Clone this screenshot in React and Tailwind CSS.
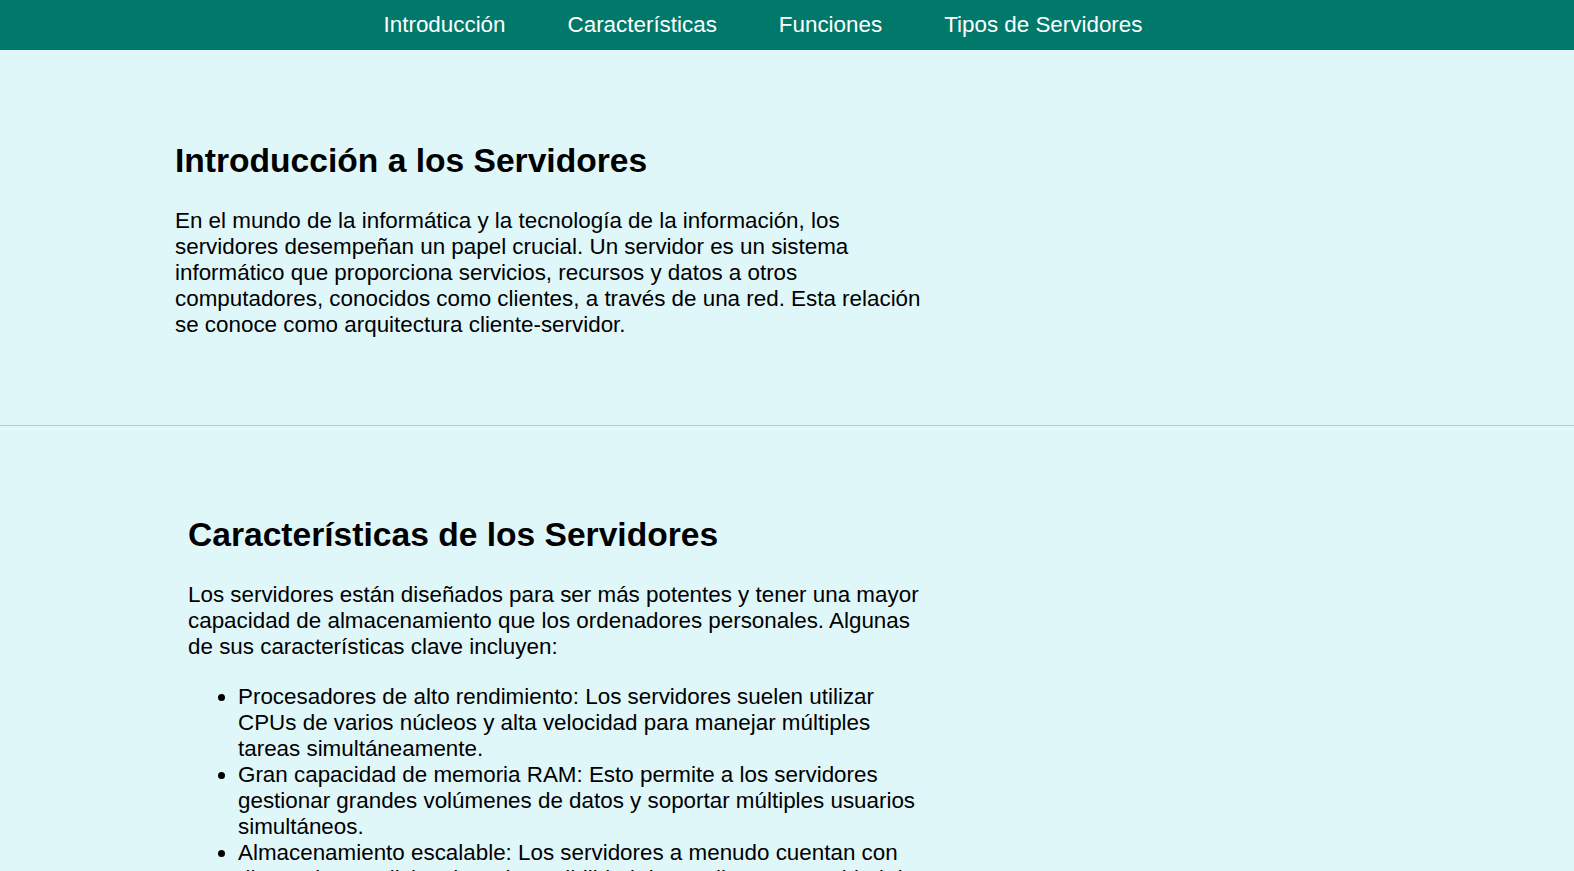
import React from 'react';

const navItems = ['Introducción', 'Características', 'Funciones', 'Tipos de Servidores'];

const features = [
  'Procesadores de alto rendimiento: Los servidores suelen utilizar CPUs de varios núcleos y alta velocidad para manejar múltiples tareas simultáneamente.',
  'Gran capacidad de memoria RAM: Esto permite a los servidores gestionar grandes volúmenes de datos y soportar múltiples usuarios simultáneos.',
  'Almacenamiento escalable: Los servidores a menudo cuentan con discos duros adicionales y la posibilidad de ampliar su capacidad de almacenamiento según sea necesario.',
  'Redundancia: Fuentes de alimentación y discos duplicados para garantizar la disponibilidad del servicio.',
];

function App() {
  return (
    <div className="min-h-screen bg-[#e0f7fa] text-black font-['Liberation_Sans',Arial,sans-serif] text-[22.4px] leading-[26px]">
      {/* Navegación */}
      <nav className="h-[50px] bg-[#00796b] flex items-center justify-center pr-[48px] gap-[62px]">
        {navItems.map((item) => (
          <a key={item} href="#" className="text-white leading-none">
            {item}
          </a>
        ))}
      </nav>

      {/* Introducción */}
      <section className="pl-[175px] pt-[91px] pb-[87px]">
        <div className="w-[756px]">
          <h2 className="text-[33.6px] leading-[39px] font-bold mb-[28px]">Introducción a los Servidores</h2>
          <p>
            En el mundo de la informática y la tecnología de la información, los servidores desempeñan un papel
            crucial. Un servidor es un sistema informático que proporciona servicios, recursos y datos a otros
            computadores, conocidos como clientes, a través de una red. Esta relación se conoce como arquitectura
            cliente-servidor.
          </p>
        </div>
      </section>

      <div className="border-t border-[#b6c9cc]" />
      <div className="h-[3px]" />
      <div className="border-t border-[#e9fcfe]" />

      {/* Características */}
      <section className="pl-[188px] pt-[85px] pb-[60px]">
        <div className="w-[742px]">
          <h2 className="text-[33.6px] leading-[39px] font-bold mb-[28px]">Características de los Servidores</h2>
          <p className="mb-[24px]">
            Los servidores están diseñados para ser más potentes y tener una mayor capacidad de almacenamiento que
            los ordenadores personales. Algunas de sus características clave incluyen:
          </p>
          <ul className="list-disc pl-[50px]">
            {features.map((f) => (
              <li key={f}>{f}</li>
            ))}
          </ul>
        </div>
      </section>
    </div>
  );
}

export default App;
